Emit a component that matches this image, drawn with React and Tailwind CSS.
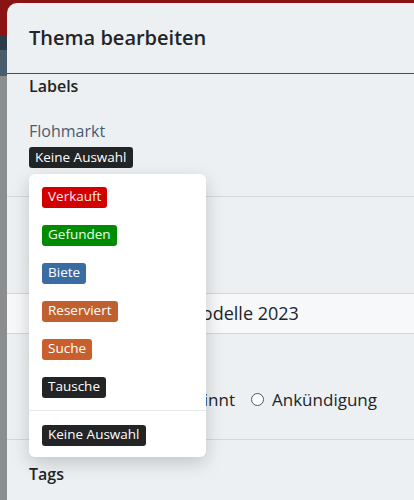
import { useState } from 'react'

const LABELS = [
  { name: 'Verkauft', cls: 'bg-[#d20000] text-[#ffe9e9]' },
  { name: 'Gefunden', cls: 'bg-[#008c00] text-[#eaffea]' },
  { name: 'Biete', cls: 'bg-[#386ca3] text-white' },
  { name: 'Reserviert', cls: 'bg-[#c0602e] text-white' },
  { name: 'Suche', cls: 'bg-[#c95f2c] text-white' },
  { name: 'Tausche', cls: 'bg-[#222425] text-white' },
]

function Badge({ name, cls }) {
  return (
    <span className={`inline-flex h-[21px] items-center rounded-[3px] px-[6px] text-[13.5px] leading-none ${cls}`}>
      {name}
    </span>
  )
}

export default function App() {
  const [selected, setSelected] = useState('Keine Auswahl')

  return (
    <div className="relative h-[500px] w-[414px] overflow-hidden bg-[#8b8d8f] font-['Open_Sans',sans-serif]">
      {/* page behind the modal */}
      <div className="flex h-[110px] flex-col">
        <div className="h-[36px] bg-[#8a1414]" />
        <div className="h-[14px] bg-[#2d3b48]" />
        <div className="h-[26px] bg-[#4a5d6c]" />
      </div>

      {/* modal */}
      <div className="absolute left-[7px] top-[3px] h-[520px] w-[440px] rounded-tl-[10px] bg-[#edf0f2] text-[#212529]">
        <div className="flex h-[71px] items-center border-b border-[#4a4f54] px-[22px]">
          <h2 className="text-[20px] font-semibold">Thema bearbeiten</h2>
        </div>

        <div className="px-[22px]">
          <div className="text-[16px] font-semibold leading-[24px]">Labels</div>
          <div className="mt-[21px] text-[16px] leading-[24px] text-[#4a5a6f]">Flohmarkt</div>
          <div className="mt-[1px]">
            <Badge name={selected} cls="bg-[#222425] text-white h-[20px]" />
          </div>
        </div>

        <div className="mt-[28px] border-t border-[#d3d7da] px-[22px]">
          <div className="pt-[55px] text-[16px] font-semibold leading-[24px]">Titel</div>
        </div>
        <div className="mt-[17px] flex h-[41px] items-center border-y border-[#d3d7da] bg-[#f6f8fa] pl-[43px] text-[18px]">
          Biete Fahrräder Modelle 2023
        </div>

        <div className="px-[22px]">
          <div className="pt-[13px] text-[16px] font-semibold leading-[24px]">Typ</div>
          <div className="mt-[8px] flex h-[40px] items-center gap-[8px] text-[17px]">
            <label className="ml-[15px] flex items-center gap-[8px]">
              <span className="h-[13px] w-[13px] rounded-full border border-[#555] bg-white" />
              Normal
            </label>
            <label className="flex items-center gap-[8px]">
              <span className="h-[13px] w-[13px] rounded-full border border-[#555] bg-white" />
              Angepinnt
            </label>
            <label className="ml-[8px] flex items-center gap-[8px]">
              <span className="h-[13px] w-[13px] rounded-full border border-[#555] bg-white" />
              Ankündigung
            </label>
          </div>
        </div>

        <div className="mt-[20px] border-t border-[#d3d7da] px-[22px]">
          <div className="pt-[22px] text-[16px] font-semibold leading-[24px]">Tags</div>
        </div>
      </div>

      {/* open label menu */}
      <div className="absolute left-[29px] top-[174px] w-[177px] rounded-[6px] bg-white pb-[3px] pt-[4px] shadow-[0_6px_18px_rgba(0,0,0,0.18)]">
        {LABELS.map((l) => (
          <button
            key={l.name}
            onClick={() => setSelected(l.name)}
            className="flex h-[38px] w-full items-center px-[13px]"
          >
            <Badge {...l} />
          </button>
        ))}
        <div className="mb-[5px] mt-[4px] border-t border-[#e6e8ea]" />
        <button onClick={() => setSelected('Keine Auswahl')} className="flex h-[38px] w-full items-center px-[13px]">
          <Badge name="Keine Auswahl" cls="bg-[#222425] text-white" />
        </button>
      </div>
    </div>
  )
}
